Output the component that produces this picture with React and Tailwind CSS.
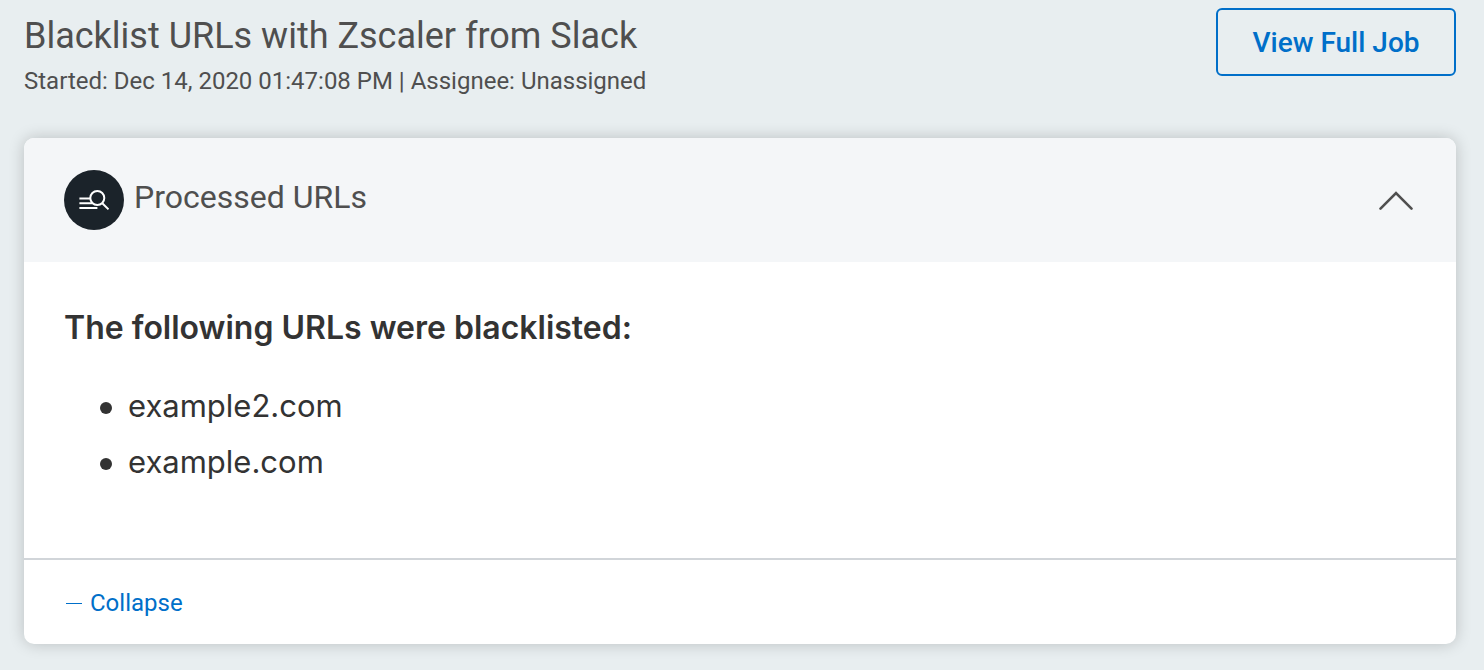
export default function App() {
  return (
    <main className="min-h-screen bg-[#e8eef0] pt-2 pr-7 pb-6 pl-6 font-['Roboto',sans-serif] text-[#4f4f4f]">
      <header className="flex items-start justify-between">
        <div className="pt-1">
          <h1 className="text-[36px] leading-[48px]">Blacklist URLs with Zscaler from Slack</h1>
          <p className="text-2xl leading-[42px]">Started: Dec 14, 2020 01:47:08 PM | Assignee: Unassigned</p>
        </div>
        <button type="button" className="min-w-60 rounded-md border-2 border-[#006fc9] px-8 pt-3 pb-[10px] text-[28px] leading-[42px] font-medium text-[#006fc9]">View Full Job</button>
      </header>
      <section className="mt-9 overflow-hidden rounded-[10px] bg-white shadow-[0_0_16px_rgba(0,0,0,0.2)]">
        <div className="flex items-center justify-between bg-[#f4f6f8] px-10 py-8">
          <div className="flex items-center gap-[10px]">
            <svg className="size-15" viewBox="0 0 60 60" fill="none" stroke="white" strokeWidth="2" aria-hidden="true">
              <circle cx="30" cy="30" r="30" fill="#1b232a" stroke="none" />
              <circle cx="33.3" cy="28" r="7" />
              <path d="M38.3 33.2l6.2 6.2M15.4 28.5H26.3M15.4 33.2H28.6M15.4 38H33.4" />
            </svg>
            <h2 className="pb-[6px] text-[32px] leading-10">Processed URLs</h2>
          </div>
          <button type="button" aria-label="Collapse section" className="pr-[2px]">
            <svg className="h-5 w-9" viewBox="0 0 36 20" fill="none" stroke="currentColor" strokeWidth="2.6" strokeLinecap="round" aria-hidden="true">
              <path d="M2.5 18.6L18 3.2L33.5 18.6" />
            </svg>
          </button>
        </div>
        <div className="px-10 pt-[46px] pb-[68px] font-['Inter',sans-serif] text-[#333333]">
          <h3 className="text-[32px] leading-10 font-semibold">The following URLs were blacklisted:</h3>
          <ul className="mt-[30px] pl-9 text-[31px] leading-14">
            <li className="flex items-center gap-4 before:mt-1 before:size-3 before:rounded-full before:bg-[#333333]">example2.com</li>
            <li className="flex items-center gap-4 before:mt-1 before:size-3 before:rounded-full before:bg-[#333333]">example.com</li>
          </ul>
        </div>
        <footer className="border-t-2 border-[#d1d5d9] px-[42px] pt-[23px] pb-[21px]">
          <button type="button" className="flex items-center gap-2 text-2xl leading-10 text-[#006fc9]">
            <svg className="size-4" viewBox="0 0 16 16" stroke="currentColor" aria-hidden="true"><path d="M0 8.5h16" /></svg>
            Collapse
          </button>
        </footer>
      </section>
    </main>
  );
}
